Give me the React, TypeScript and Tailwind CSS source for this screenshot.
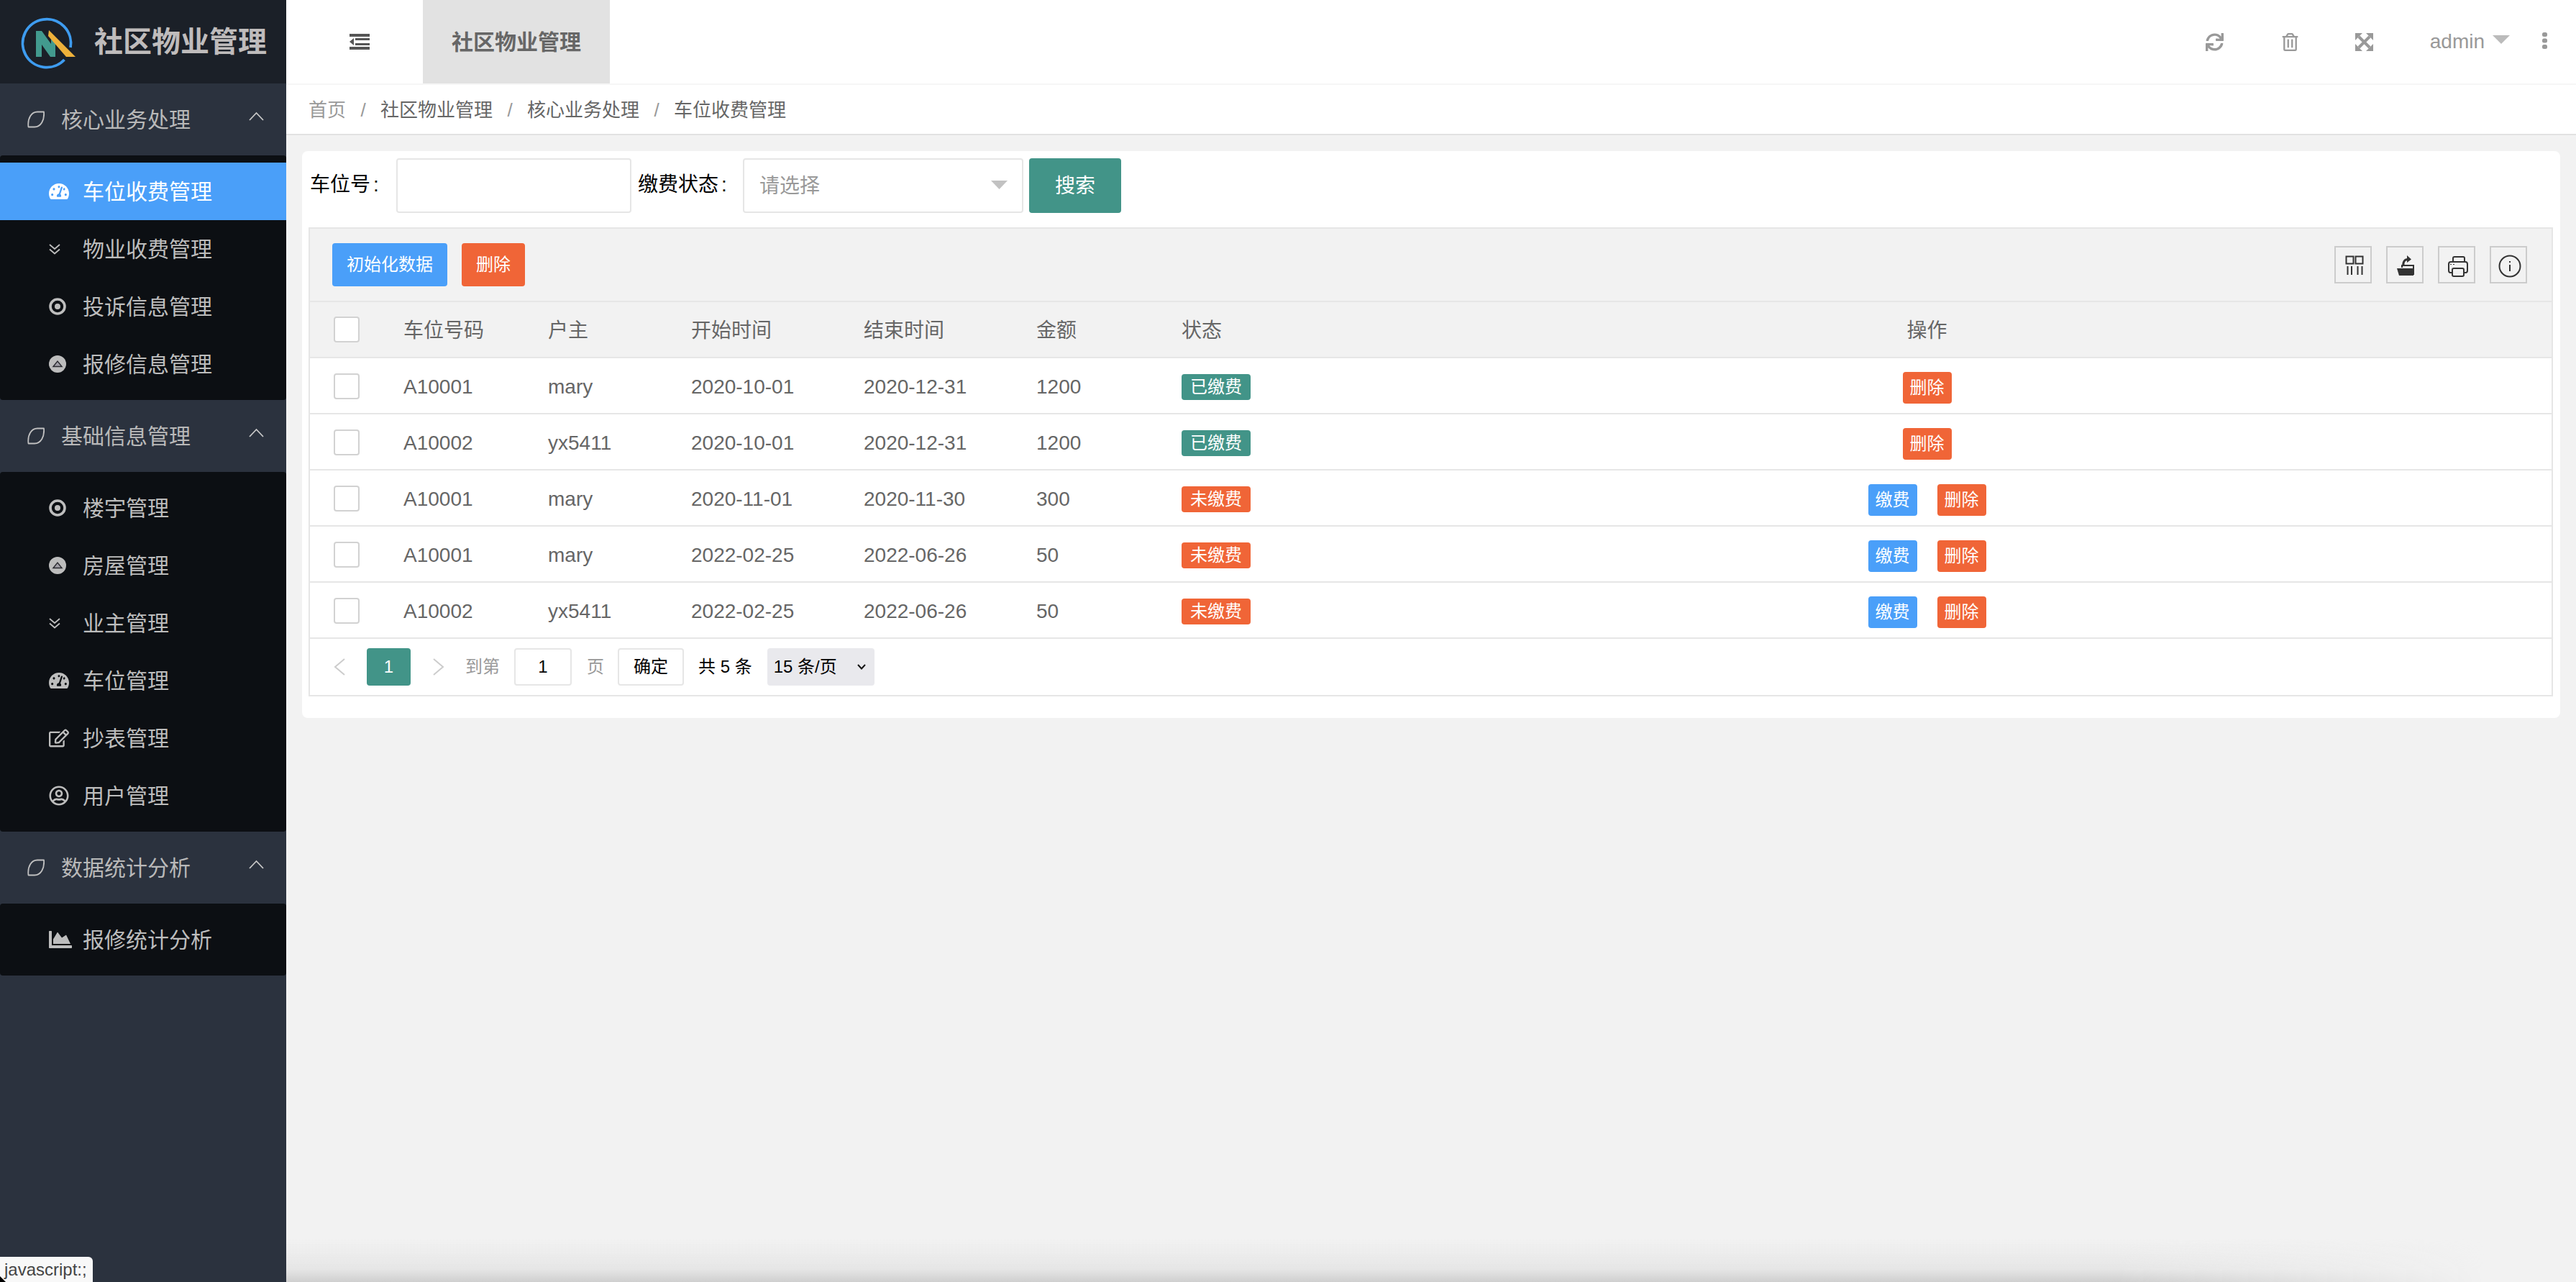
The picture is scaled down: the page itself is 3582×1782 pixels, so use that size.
import React from 'react';
import { FaSync, FaRegTrashAlt, FaTachometerAlt, FaRegEdit, FaRegUserCircle, FaChartArea } from 'react-icons/fa';

const Leaf = () => (
  <svg width="24" height="24" viewBox="0 0 24 24" fill="none" stroke="#c0c0c0" strokeWidth="1.8" strokeLinejoin="round">
    <path d="M1.5 22.5 C0 10 6 1.5 14 1.5 H23 C24 13 19 22.5 10 22.5 Z" />
  </svg>
);

const ChevronUp = () => (
  <svg width="21" height="13" viewBox="0 0 21 13" fill="none" stroke="#c8c8c8" strokeWidth="1.8">
    <path d="M1 12 L10.5 2 L20 12" />
  </svg>
);

const DoubleDown = () => (
  <svg width="16" height="15" viewBox="0 0 16 15" fill="none" stroke="#bdbdbd" strokeWidth="1.8">
    <path d="M1 1 L8 7 L15 1" />
    <path d="M1 7.5 L8 13.5 L15 7.5" />
  </svg>
);

const DotCircle = () => (
  <svg width="24" height="24" viewBox="0 0 24 24" fill="none">
    <circle cx="12" cy="12" r="10" stroke="#bdbdbd" strokeWidth="3.6" />
    <circle cx="12" cy="12" r="4" fill="#bdbdbd" />
  </svg>
);

const UpCircle = () => (
  <svg width="24" height="24" viewBox="0 0 24 24">
    <circle cx="12" cy="12" r="12" fill="#bdbdbd" />
    <path d="M6 15.5 L12 8 L18 15.5 Z" fill="#a09ea6" stroke="#2a2a30" strokeWidth="1.4" />
  </svg>
);

const ExpandArrows = () => (
  <svg width="25" height="25" viewBox="0 0 25 25" fill="#999999">
    <path d="M5 5 L20 20 M20 5 L5 20" stroke="#999999" strokeWidth="4" />
    <polygon points="0,0 10,0 0,10" />
    <polygon points="25,0 15,0 25,10" />
    <polygon points="0,25 10,25 0,15" />
    <polygon points="25,25 15,25 25,15" />
  </svg>
);

const Triangle = ({ w, h, color }: { w: number; h: number; color: string }) => (
  <svg width={w} height={h} viewBox={`0 0 ${w} ${h}`}>
    <polygon points={`0,0 ${w},0 ${w / 2},${h}`} fill={color} />
  </svg>
);

const Logo = () => (
  <svg width="131" height="116" viewBox="0 0 131 116" className="shrink-0">
    <path d="M98 66 A33.5 33.5 0 1 0 89.5 83" fill="none" stroke="#3e9cf0" strokeWidth="3.8" />
    <path d="M50 79 L50 43 L58 43 L71 61 L71 52 L77 60 L77 79 L70 79 L58 62 L58 79 Z" fill="#429a8e" />
    <path d="M68 42 L105 79 L92 79 L67 50 Z" fill="#eeb13a" />
  </svg>
);

const sections = [
  {
    title: '核心业务处理',
    items: [
      { icon: <FaTachometerAlt size={28} />, label: '车位收费管理', active: true },
      { icon: <DoubleDown />, label: '物业收费管理' },
      { icon: <DotCircle />, label: '投诉信息管理' },
      { icon: <UpCircle />, label: '报修信息管理' },
    ],
  },
  {
    title: '基础信息管理',
    items: [
      { icon: <DotCircle />, label: '楼宇管理' },
      { icon: <UpCircle />, label: '房屋管理' },
      { icon: <DoubleDown />, label: '业主管理' },
      { icon: <FaTachometerAlt size={28} />, label: '车位管理' },
      { icon: <FaRegEdit size={28} />, label: '抄表管理' },
      { icon: <FaRegUserCircle size={28} />, label: '用户管理' },
    ],
  },
  {
    title: '数据统计分析',
    items: [{ icon: <FaChartArea size={32} />, label: '报修统计分析' }],
  },
];

const rows = [
  { no: 'A10001', owner: 'mary', start: '2020-10-01', end: '2020-12-31', money: '1200', paid: true },
  { no: 'A10002', owner: 'yx5411', start: '2020-10-01', end: '2020-12-31', money: '1200', paid: true },
  { no: 'A10001', owner: 'mary', start: '2020-11-01', end: '2020-11-30', money: '300', paid: false },
  { no: 'A10001', owner: 'mary', start: '2022-02-25', end: '2022-06-26', money: '50', paid: false },
  { no: 'A10002', owner: 'yx5411', start: '2022-02-25', end: '2022-06-26', money: '50', paid: false },
];

const Sidebar = () => (
  <aside className="w-[398px] shrink-0 bg-[#2b323e] flex flex-col">
    <div className="h-[116px] bg-[#1b2028] flex items-center">
      <Logo />
      <span className="text-[40px] font-bold text-[#bfbcbc] leading-none">社区物业管理</span>
    </div>
    {sections.map((s) => (
      <div key={s.title}>
        <div className="h-[100px] flex items-center pl-[38px] pr-[31px] text-[30px] text-[#b9b9b9]">
          <Leaf />
          <span className="ml-[23px]">{s.title}</span>
          <span className="ml-auto -mt-[9px]">
            <ChevronUp />
          </span>
        </div>
        <div className="bg-[#0c0f13] rounded-[4px] py-[10px]">
          {s.items.map((it) => (
            <div
              key={it.label}
              className={`h-[80px] flex items-center pl-[68px] text-[30px] ${it.active ? 'bg-[#4a9ff9] text-white' : 'text-[#bdbdbd]'}`}
            >
              <span className="w-[47px] flex items-center">{it.icon}</span>
              {it.label}
            </div>
          ))}
        </div>
      </div>
    ))}
  </aside>
);

const TopBar = () => (
  <div className="h-[118px] shrink-0 bg-white border-b-2 border-[#f6f6f6] flex items-stretch">
    <div className="w-[190px] flex items-center pl-[88px]">
      <svg width="28" height="22" viewBox="0 0 28 22" fill="#555555">
        <rect x="0" y="0" width="28" height="4" />
        <rect x="0" y="18" width="28" height="4" />
        <rect x="8" y="6" width="20" height="3" />
        <rect x="8" y="13" width="20" height="3" />
        <polygon points="6,6 0,11 6,16" />
      </svg>
    </div>
    <div className="w-[260px] bg-[#e2e2e2] flex items-center justify-center text-[30px] font-bold text-[#666666]">社区物业管理</div>
    <div className="ml-auto flex items-center pr-[40px] text-[#999999]">
      <FaSync size={25} />
      <span className="ml-[80px]"><FaRegTrashAlt size={25} /></span>
      <span className="ml-[78px]"><ExpandArrows /></span>
      <span className="ml-[79px] text-[28px]">admin</span>
      <span className="ml-[11px] -mt-[6px]"><Triangle w={24} h={12} color="#bbbbbb" /></span>
      <svg width="7" height="23" viewBox="0 0 7 23" fill="#999999" className="ml-[45px] -mt-[4px]">
        <rect x="0" y="0" width="7" height="6" rx="2.5" />
        <rect x="0" y="8.5" width="7" height="6" rx="2.5" />
        <rect x="0" y="17" width="7" height="6" rx="2.5" />
      </svg>
    </div>
  </div>
);

const Breadcrumb = () => {
  const parts = ['社区物业管理', '核心业务处理', '车位收费管理'];
  return (
    <div className="h-[70px] shrink-0 bg-white border-b-2 border-[#e2e2e2] flex items-center pl-[31px] pt-[3px] text-[26px] text-[#666666]">
      <span className="text-[#999999]">首页</span>
      {parts.map((p) => (
        <React.Fragment key={p}>
          <span className="w-[48px] text-center text-[#999999]">/</span>
          <span>{p}</span>
        </React.Fragment>
      ))}
    </div>
  );
};

const SearchRow = () => (
  <div className="flex items-center h-[76px] text-[28px] text-black">
    <label className="w-[122px] pl-[2px] mb-[2px]">车位号<span className="ml-[4px]">:</span></label>
    <input className="w-[327px] h-[76px] bg-white border-2 border-[#e6e6e6] rounded-[4px] outline-none" />
    <label className="w-[155px] pl-[9px] mb-[2px]">缴费状态<span className="ml-[4px]">:</span></label>
    <div className="w-[390px] h-[76px] bg-white border-2 border-[#e6e6e6] rounded-[4px] flex items-center pl-[21px] pr-[20px] text-[#999999] pt-[2px]">
      请选择
      <span className="ml-auto -mt-[4px]"><Triangle w={23} h={12} color="#c2c2c2" /></span>
    </div>
    <button className="ml-[8px] w-[128px] h-[76px] pt-[2px] bg-[#429488] rounded-[4px] text-white">搜索</button>
  </div>
);

const ToolIcon = ({ children }: { children: React.ReactNode }) => (
  <div className="w-[52px] h-[52px] border-2 border-[#cccccc]">
    <svg width="48" height="48" viewBox="0 0 48 48" fill="none" stroke="#333333" strokeWidth="2">
      {children}
    </svg>
  </div>
);

const Toolbar = () => (
  <div className="h-[102px] bg-[#f2f2f2] border-b-2 border-[#e6e6e6] flex items-center pl-[31px] pr-[34px] text-[24px] text-white">
    <button className="w-[160px] h-[60px] bg-[#4a9ff9] rounded-[4px]">初始化数据</button>
    <button className="ml-[20px] w-[88px] h-[60px] bg-[#f06537] rounded-[4px]">删除</button>
    <div className="ml-auto flex gap-[20px]">
      <ToolIcon>
        <rect x="14.5" y="12.5" width="10" height="10" />
        <rect x="27.5" y="12.5" width="10" height="10" />
        <path d="M16.5 26 V38 M22 26 V38 M30.5 26 V38 M36.5 26 V38" />
      </ToolIcon>
      <ToolIcon>
        <path d="M13 29 H36 V39 H16 Z" fill="#333333" stroke="none" />
        <path d="M20 28 V25 H36 V38" strokeWidth="2" />
        <path d="M22 26 C21 20 24 16.5 28 16.5" strokeWidth="3" />
        <polygon points="27,11 33,16.5 27,21" fill="#333333" stroke="none" />
      </ToolIcon>
      <ToolIcon>
        <path d="M19 20 V15 Q19 13 21 13 H33 Q35 13 35 15 V20" />
        <path d="M18 35 H15.5 Q13 35 13 32 V23 Q13 20 16 20 H36 Q39 20 39 23 V32 Q39 35 36.5 35 H34" />
        <rect x="18" y="29" width="16" height="11" rx="2" />
        <path d="M15 23.5 H17 M19 23.5 H21" strokeWidth="1" />
      </ToolIcon>
      <ToolIcon>
        <circle cx="26" cy="26" r="14.5" />
        <path d="M26 24 V33" />
        <path d="M26 19 V21" />
      </ToolIcon>
    </div>
  </div>
);

const Checkbox = ({ className = '' }: { className?: string }) => (
  <span className={`block w-[36px] h-[36px] bg-white border-2 border-[#d2d2d2] rounded-[4px] ${className}`} />
);

const gridCols = 'grid grid-cols-[100px_200px_200px_240px_240px_200px_200px_1fr] items-center h-[78px] border-b-2 border-[#e6e6e6]';

const Table = () => (
  <div className="mt-[20px] border-2 border-[#e6e6e6] bg-white text-[28px] text-[#666666]">
    <Toolbar />
    <div className={`${gridCols} bg-[#f2f2f2]`}>
      <span className="pl-[33px]"><Checkbox /></span>
      <span className="pl-[30px] pt-[4px]">车位号码</span>
      <span className="pl-[31px] pt-[4px]">户主</span>
      <span className="pl-[30px] pt-[4px]">开始时间</span>
      <span className="pl-[30px] pt-[4px]">结束时间</span>
      <span className="pl-[30px] pt-[4px]">金额</span>
      <span className="pl-[32px] pt-[4px]">状态</span>
      <span className="text-center pt-[4px]">操作</span>
    </div>
    {rows.map((r, i) => (
      <div key={i} className={gridCols}>
        <span className="pl-[33px]"><Checkbox className="mt-[2px]" /></span>
        <span className="pl-[30px] pt-[4px]">{r.no}</span>
        <span className="pl-[31px] pt-[4px]">{r.owner}</span>
        <span className="pl-[30px] pt-[4px]">{r.start}</span>
        <span className="pl-[30px] pt-[4px]">{r.end}</span>
        <span className="pl-[30px] pt-[4px]">{r.money}</span>
        <span className="pl-[32px]">
          <span className={`mt-[4px] flex items-center justify-center w-[96px] h-[36px] rounded-[4px] text-[24px] text-white ${r.paid ? 'bg-[#429488]' : 'bg-[#f06537]'}`}>
            {r.paid ? '已缴费' : '未缴费'}
          </span>
        </span>
        <span className="flex justify-center gap-[28px] mt-[6px] text-[24px] text-white">
          {!r.paid && <button className="w-[68px] h-[44px] bg-[#4a9ff9] rounded-[4px]">缴费</button>}
          <button className="w-[68px] h-[44px] bg-[#f06537] rounded-[4px]">删除</button>
        </span>
      </div>
    ))}
    <Pager />
  </div>
);

const Pager = () => (
  <div className="h-[78px] flex items-center pl-[33px] text-[24px] text-black">
    <svg width="16" height="24" viewBox="0 0 16 24" fill="none" stroke="#cccccc" strokeWidth="2">
      <path d="M15 1 L2 12 L15 23" />
    </svg>
    <span className="ml-[30px] w-[61px] h-[52px] bg-[#429488] rounded-[4px] flex items-center justify-center text-white">1</span>
    <svg width="16" height="24" viewBox="0 0 16 24" fill="none" stroke="#cccccc" strokeWidth="2" className="ml-[31px]">
      <path d="M1 1 L14 12 L1 23" />
    </svg>
    <span className="ml-[29px] text-[#999999]">到第</span>
    <input defaultValue="1" className="ml-[20px] w-[80px] h-[52px] border-2 border-[#e6e6e6] rounded-[4px] text-center outline-none" />
    <span className="ml-[21px] text-[#999999]">页</span>
    <button className="ml-[19px] w-[92px] h-[52px] bg-white border-2 border-[#e6e6e6] rounded-[4px]">确定</button>
    <span className="ml-[20px]">共 5 条</span>
    <div className="ml-[21px] w-[149px] h-[52px] bg-[#e9e9ed] rounded-[4px] flex items-center pl-[9px]">
      15 条/页
      <svg width="12" height="8" viewBox="0 0 12 8" fill="none" stroke="#111111" strokeWidth="2" className="ml-auto mr-[12px]">
        <path d="M1 1 L6 6.5 L11 1" />
      </svg>
    </div>
  </div>
);

export default function App() {
  return (
    <div className="relative flex h-screen w-full overflow-hidden bg-[#f2f2f2] font-['Liberation_Sans','Noto_Sans_CJK_SC',sans-serif]">
      <Sidebar />
      <main className="relative flex-1 flex flex-col min-w-0">
        <TopBar />
        <Breadcrumb />
        <div className="mx-[22px] mt-[22px] bg-white rounded-[8px] pt-[10px] pb-[30px] pl-[9px] pr-[10px]">
          <SearchRow />
          <Table />
        </div>
        <div className="absolute left-0 right-0 bottom-0 h-[60px] bg-linear-to-t from-[#cfcfcf] via-[#e6e6e6] via-30% to-transparent [mask-image:linear-gradient(to_right,black_80%,transparent_96%)]" />
      </main>
      <div className="absolute left-0 bottom-0 w-[129px] h-[35px] bg-[#f8f8f8] rounded-tr-[6px] pl-[6px] text-[24px] leading-[36px] text-[#444444]">
        javascript:;
      </div>
      <svg width="8" height="8" viewBox="0 0 8 8" className="absolute left-0 bottom-0">
        <polygon points="0,0 8,8 0,8" fill="#000000" />
      </svg>
    </div>
  );
}
